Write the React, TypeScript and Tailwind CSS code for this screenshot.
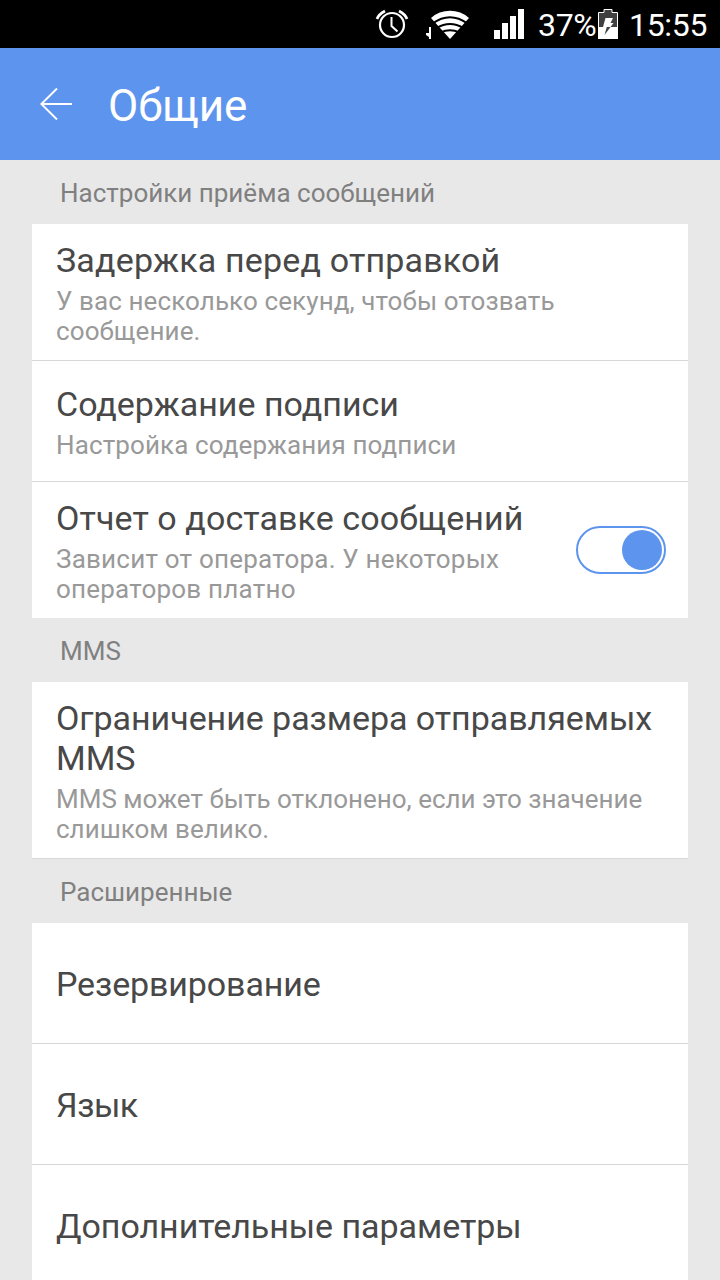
import React from 'react';
import { clsx } from 'clsx';

const StatusBar: React.FC = () => (
  <div className="flex h-12 items-center bg-black pl-[375px] text-white">
    {/* Alarm */}
    <svg className="h-8 w-[34px] shrink-0" viewBox="0 0 34 32" fill="none" stroke="#fff">
      <circle cx="17" cy="17" r="12" strokeWidth="2.2" />
      <path d="M16.5 9v9l6 5.5" strokeWidth="2" />
      <path d="M2 11Q4 6 10 3M24 3q6 3 8 8" strokeWidth="2.8" />
    </svg>
    {/* Wi-Fi */}
    <svg className="ml-[17px] h-8 w-11 shrink-0" viewBox="0 0 44 32">
      <path d="M3 19h2v12H3v-2l-3-2v-2h3z" fill="#fff" />
      <path d="M5 10A28.5 28.5 0 0 1 43 10L24 31z" fill="#fff" />
      <path
        d="M6.6 15.5Q24 3 41.4 15.5M10.6 20Q24 12 37.4 20M14.6 24.5Q24 20 33.4 24.5"
        fill="none"
        stroke="#000"
        strokeWidth="2"
      />
    </svg>
    {/* Signal */}
    <svg className="ml-6 h-[30px] w-[30px] shrink-0" viewBox="0 0 30 30" fill="#fff">
      <path d="M0 21h6v9H0zM8 14h6v16H8zM16 7h6v23h-6zM24 0h6v30h-6z" />
    </svg>
    <span className="ml-3.5 w-[60px] pt-px text-[32px] leading-none tracking-[-0.3px] whitespace-nowrap">37%</span>
    {/* Battery */}
    <svg className="h-[30px] w-5 shrink-0" viewBox="0 0 20 30">
      <path d="M.5 3.5H6V.5h8v3h5.5v26H.5z" fill="#404040" stroke="#fff" />
      <path d="M0 18h20v12H0z" fill="#fff" />
      <path d="M7.5 9H15l-2.5 5h3l-3 4H5z" fill="#fff" />
      <path d="M8.8 18h3.7l-6 8z" fill="#404040" />
    </svg>
    <span className="ml-[11px] pt-px text-[32px] leading-none tracking-[-0.3px]">15:55</span>
  </div>
);

const AppBar: React.FC = () => (
  <header className="flex h-28 items-center bg-[#5d94ed] pl-10 text-white">
    <svg className="h-8 w-8" viewBox="0 0 32 32" fill="none" stroke="currentColor" strokeWidth="2">
      <path d="M32 16H1M17 .5L1.3 16 17 31.5" />
    </svg>
    <h1 className="ml-9 pt-[3px] text-[44px] leading-[52px]">Общие</h1>
  </header>
);

const SectionTitle: React.FC<{ children: React.ReactNode }> = ({ children }) => (
  <h2 className="flex h-16 items-center pt-0.5 pl-[60px] text-[26px] leading-[30px] text-[#808080]">{children}</h2>
);

const Toggle: React.FC = () => (
  <button
    role="switch"
    aria-checked="true"
    className="flex h-12 w-[90px] shrink-0 items-center justify-end rounded-full border-2 border-[#5d94ed] pr-0.5"
  >
    <span className="h-10 w-10 rounded-full bg-[#5d94ed]" />
  </button>
);

interface RowProps {
  title: string;
  description?: string;
  className: string;
  titleClass?: string;
  descriptionClass?: string;
  divider?: boolean;
  toggle?: boolean;
}

const Row: React.FC<RowProps> = ({ title, description, className, titleClass, descriptionClass, divider, toggle }) => (
  <div
    className={clsx(
      'mx-8 flex items-center bg-white pr-[22px] pl-6',
      divider && 'border-b border-[#d8d8d8]',
      className
    )}
  >
    <div className="flex-1 pt-0.5">
      <h3 className={clsx('text-[34px] leading-10 text-[#484848]', titleClass)}>{title}</h3>
      {description && (
        <p className={clsx('mt-1.5 text-[26px] leading-[30px] text-[#999]', descriptionClass)}>{description}</p>
      )}
    </div>
    {toggle && <Toggle />}
  </div>
);

export default function App() {
  return (
    <div className="h-[1280px] w-[720px] overflow-hidden bg-[#e8e8e8] font-['Roboto',sans-serif]">
      <StatusBar />
      <AppBar />

      <SectionTitle>Настройки приёма сообщений</SectionTitle>
      <Row
        title="Задержка перед отправкой"
        description="У вас несколько секунд, чтобы отозвать сообщение."
        className="h-[137px]"
        titleClass="tracking-[0.17px]"
        descriptionClass="tracking-[0.1px]"
        divider
      />
      <Row
        title="Содержание подписи"
        description="Настройка содержания подписи"
        className="h-[121px]"
        descriptionClass="tracking-[0.11px]"
        divider
      />
      <Row
        title="Отчет о доставке сообщений"
        description="Зависит от оператора. У некоторых операторов платно"
        className="h-[136px]"
        titleClass="tracking-[0.08px]"
        descriptionClass="tracking-[0.22px]"
        toggle
      />

      <SectionTitle>MMS</SectionTitle>
      <Row
        title="Ограничение размера отправляемых MMS"
        description="MMS может быть отклонено, если это значение слишком велико."
        className="h-[177px]"
        titleClass="tracking-[-0.05px]"
        divider
      />

      <SectionTitle>Расширенные</SectionTitle>
      <Row title="Резервирование" className="h-[121px]" titleClass="tracking-[-0.12px]" divider />
      <Row title="Язык" className="h-[121px]" titleClass="tracking-[-0.5px]" divider />
      <Row title="Дополнительные параметры" className="h-[121px]" titleClass="tracking-[-0.05px]" divider />
    </div>
  );
}
